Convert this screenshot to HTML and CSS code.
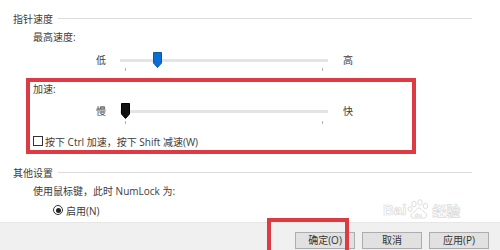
FILE: index.html
```html
<!DOCTYPE html>
<html lang="zh-CN">
<head>
<meta charset="utf-8">
<link rel="stylesheet" href="styles.css">
</head>
<body>
<div class="page">
  <div class="grp-head"><span class="grp-title">指针速度</span><span class="grp-line"></span></div>
  <div class="sub-label">最高速度:</div>
  <div class="slider-row">
    <span class="end-label">低</span>
    <div class="track">
      <span class="tick tick-l"></span><span class="tick tick-r"></span>
      <svg class="thumb thumb-blue" width="9" height="16" viewBox="0 0 9 16"><polygon points="0.5,0.5 8.5,0.5 8.5,11 4.5,15.5 0.5,11" fill="#0a6fd2" stroke="#0a58a8" stroke-width="1"/></svg>
    </div>
    <span class="end-label end-right">高</span>
  </div>

  <div class="accel">
    <div class="sub-label tight">加速:</div>
    <div class="slider-row slider2">
      <span class="end-label">慢</span>
      <div class="track">
        <span class="tick tick-l"></span><span class="tick tick-r"></span>
        <svg class="thumb thumb-black" width="9" height="16" viewBox="0 0 9 16"><polygon points="0.5,0.5 8.5,0.5 8.5,11 4.5,15.5 0.5,11" fill="#111" stroke="#000" stroke-width="1"/></svg>
      </div>
      <span class="end-label end-right">快</span>
    </div>
    <div class="check-row"><span class="checkbox"></span><span>按下 Ctrl 加速，按下 Shift 减速(W)</span></div>
  </div>

  <div class="grp-head grp2"><span class="grp-title">其他设置</span><span class="grp-line"></span></div>
  <div class="sub-label">使用鼠标键，此时 NumLock 为:</div>
  <div class="radio-row"><span class="radio"><span class="dot"></span></span><span>启用(N)</span></div>

  <div class="footer">
    <button class="btn">确定(O)</button>
    <button class="btn">取消</button>
    <button class="btn">应用(P)</button>
  </div>
</div>
<div class="watermark"><span>Bai</span><svg width="26" height="20" viewBox="0 0 26 20"><g fill="none" stroke="#dddddd" stroke-width="1"><ellipse cx="8" cy="5" rx="2.2" ry="2.8"/><ellipse cx="14" cy="3.5" rx="2.2" ry="2.8"/><ellipse cx="19.5" cy="7" rx="2.2" ry="2.6"/><ellipse cx="4" cy="10" rx="2" ry="2.4"/><path d="M7 19 C4 19 4 15 8 13 C10 11 11 9 13 9 C15 9 16 11 18 13 C22 15 21 19 18 19 Z"/></g><text x="8.5" y="17.5" font-size="6" font-family="Liberation Sans" fill="#dddddd">du</text></svg><span class="wm-cn">经验</span></div>
<div class="red-mark"></div>
</body>
</html>
```

FILE: styles.css
```css
html, body {
  margin: 0;
  padding: 0;
  background: #ffffff;
}
body {
  width: 500px;
  height: 250px;
  overflow: hidden;
  position: relative;
  font-family: "Open Sans", "Noto Sans CJK SC", sans-serif;
  font-size: 10px;
  color: #3c3c3c;
}
.page {
  padding-top: 11px;
}
.grp-head {
  display: flex;
  align-items: center;
  height: 14px;
  padding-left: 13px;
  padding-right: 28px;
  gap: 5px;
}
.grp-line {
  flex: 1;
  height: 1px;
  background: #dcdcdc;
}
.grp2 {
  margin-top: 11px;
}
.sub-label {
  height: 14px;
  line-height: 14px;
  margin-top: 5px;
  padding-left: 33px;
}
.sub-label.tight {
  margin-top: 0;
  padding-left: 3px;
}
.slider-row {
  display: flex;
  align-items: center;
  height: 20px;
  margin-top: 6px;
  padding-left: 96px;
}
.end-label {
  width: 10px;
  line-height: 14px;
}
.end-right {
  margin-left: 15px;
}
.track {
  position: relative;
  width: 208px;
  height: 3px;
  margin-left: 14px;
  background: #e4e4e4;
}
.tick {
  position: absolute;
  top: 9px;
  width: 1px;
  height: 3px;
  background: #b0b0b0;
}
.tick-l { left: 5px; }
.tick-r { left: 202px; }
.thumb {
  position: absolute;
  top: -7px;
  display: block;
}
.thumb-blue { left: 33px; }
.thumb-black { left: 1px; }

.accel {
  margin-top: 8px;
  margin-left: 26px;
  width: 382px;
  border: 4px solid #dd3b43;
  padding-bottom: 2px;
}
.slider2 {
  margin-top: 5px;
  padding-left: 66px;
}
.slider2 .tick { top: 11px; }
.check-row {
  display: flex;
  align-items: center;
  gap: 2px;
  height: 14px;
  margin-top: 13px;
  padding-left: 3px;
}
.checkbox {
  width: 8px;
  height: 8px;
  border: 1px solid #333;
  background: #fff;
}
.radio-row {
  display: flex;
  align-items: center;
  gap: 3px;
  height: 14px;
  margin-top: 5px;
  padding-left: 53px;
}
.radio {
  display: flex;
  align-items: center;
  justify-content: center;
  width: 8px;
  height: 8px;
  border: 1px solid #333;
  border-radius: 50%;
}
.dot {
  width: 5px;
  height: 5px;
  border-radius: 50%;
  background: #222;
}
.footer {
  margin-top: 5px;
  height: 28px;
  background: #f0f0f0;
  border-top: 1px solid #e6e6e6;
  box-sizing: border-box;
  display: flex;
  justify-content: flex-end;
  align-items: flex-start;
  gap: 7px;
  padding-top: 9px;
  padding-right: 11px;
}
.btn {
  width: 60px;
  height: 17px;
  padding: 0;
  border: 1px solid #adadad;
  background: #e1e1e1;
  font-family: "Open Sans", "Noto Sans CJK SC", sans-serif;
  font-size: 10px;
  color: #333;
  line-height: 15px;
}
.watermark {
  position: absolute;
  left: 383px;
  top: 199px;
  display: flex;
  align-items: flex-end;
  font-family: "Liberation Sans", sans-serif;
  font-weight: bold;
  font-size: 15px;
  line-height: 18px;
  color: rgba(255,255,255,0.6);
  -webkit-text-stroke: 0.7px #dadada;
}
.wm-cn {
  font-family: "Noto Sans CJK SC", sans-serif;
  font-size: 14px;
}
.red-mark {
  position: absolute;
  left: 267px;
  top: 218px;
  width: 74px;
  height: 34px;
  border: 4px solid #dd3b43;
}
```
